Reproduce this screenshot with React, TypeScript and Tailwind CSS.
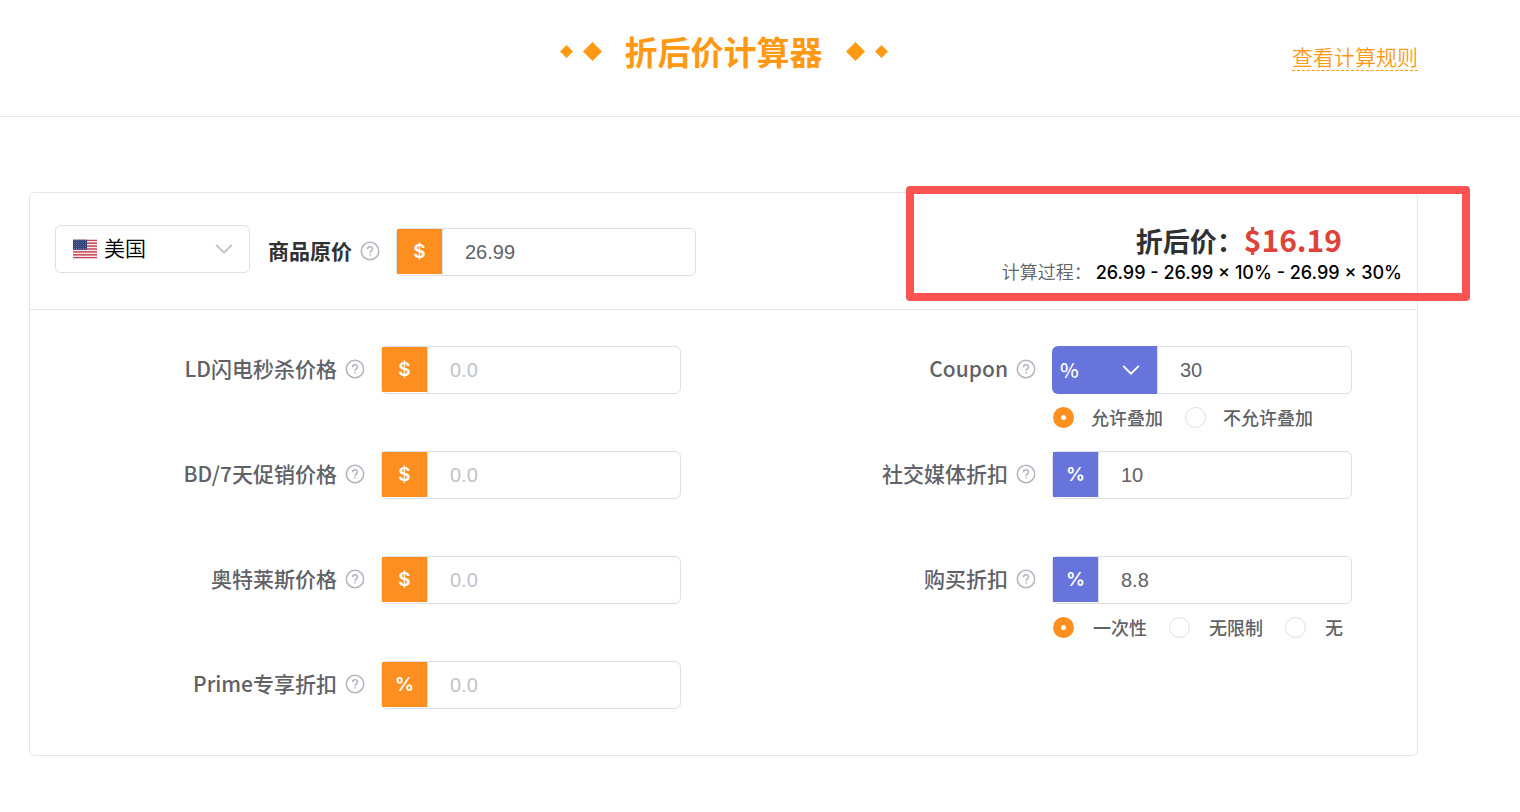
import { useState, type ReactNode } from "react";

type Tone = "orange" | "blue";

const tones: Record<Tone, string> = {
    orange: "bg-[#fc8f1f]",
    blue: "bg-[#6674dc]",
};

function HelpIcon() {
    return (
        <svg viewBox="0 0 20 20" className="size-5 shrink-0" fill="none" stroke="#b0b5bf" strokeWidth="1.5" aria-hidden="true">
            <circle cx="10" cy="10" r="8.7" />
            <path d="M7.5 8.3c0-1.6 1.1-2.5 2.5-2.5s2.5.9 2.5 2.2c0 1.8-2.4 1.9-2.4 3.9" />
            <path d="M10.1 13v1.6" />
        </svg>
    );
}

function Chevron({ className }: { className: string }) {
    return (
        <svg viewBox="0 0 18 10" className={`pointer-events-none absolute top-1/2 h-[10px] w-[18px] -translate-y-1/2 ${className}`} fill="none" strokeWidth="1.9" strokeLinecap="round" aria-hidden="true">
            <path d="M1.7 1.4 9 8.7l7.3-7.3" />
        </svg>
    );
}

function UsFlag() {
    return (
        <svg viewBox="0 0 24 19" className="pointer-events-none absolute top-1/2 left-[18px] h-[19px] w-6 -translate-y-1/2" aria-hidden="true">
            <rect width="24" height="19" fill="#f3e9ec" />
            {[0, 1, 2, 3, 4, 5, 6].map((i) => (
                <rect key={i} y={i * 2.92} width="24" height="1.46" fill="#c8414f" />
            ))}
            <rect width="14" height="10.2" fill="#2f4475" />
            {[0, 1, 2, 3, 4].map((row) =>
                [0, 1, 2, 3, 4, 5].map((col) => (
                    <circle key={`${row}-${col}`} cx={1.4 + col * 2.2} cy={1.2 + row * 1.95} r="0.4" fill="#b9c3dc" />
                ))
            )}
        </svg>
    );
}

function Diamond({ className }: { className: string }) {
    return (
        <svg viewBox="0 0 20 20" className={className} fill="#ff9913" aria-hidden="true">
            <path d="M10 0 20 10 10 20 0 10Z" />
        </svg>
    );
}

function AmountInput({ id, unit, tone, value }: { id: string; unit: string; tone: Tone; value?: string }) {
    return (
        <div className="flex h-12 w-[300px] shrink-0 rounded-[6px] border border-[#dcdfe6]">
            <span className={`flex size-[45px] shrink-0 items-center justify-center pt-0.5 font-['Inter',sans-serif] text-[19px] font-semibold text-white ${tones[tone]}`}>
                {unit}
            </span>
            <input
                id={id}
                defaultValue={value}
                placeholder="0.0"
                className="min-w-0 flex-1 rounded-r-[6px] border-l border-[#dcdfe6] bg-transparent pl-[22px] font-['Liberation_Sans',Arial,sans-serif] text-[20px] text-[#606266] outline-none placeholder:text-[#c0c4cc]"
            />
        </div>
    );
}

function Field({ id, label, children, extra }: { id: string; label: string; children: ReactNode; extra?: ReactNode }) {
    return (
        <div className="flex min-h-[82px] items-start justify-end">
            <div className="mr-4 flex h-[46px] items-center gap-2">
                <label htmlFor={id} className="pb-0.5 text-[21px] leading-6 font-medium text-[#606266]">{label}</label>
                <HelpIcon />
            </div>
            <div className="w-[300px] shrink-0">
                {children}
                {extra}
            </div>
        </div>
    );
}

function RadioRow({ name, options, labelGap }: { name: string; options: string[]; labelGap: string }) {
    const [selected, setSelected] = useState(options[0]);

    return (
        <div className="mt-3 flex items-center gap-[22px] pl-px whitespace-nowrap">
            {options.map((option) => (
                <label key={option} className={`flex items-center text-[18px] leading-[22px] font-medium text-[#606266] ${labelGap}`}>
                    <input
                        type="radio"
                        name={name}
                        checked={selected === option}
                        onChange={() => setSelected(option)}
                        className="size-[21px] shrink-0 appearance-none rounded-full border border-[#dcdfe6] bg-white checked:border-8 checked:border-[#fc8f1f]"
                    />
                    {option}
                </label>
            ))}
        </div>
    );
}

const priceFields = [
    { id: "ld", label: "LD闪电秒杀价格", unit: "$" },
    { id: "bd", label: "BD/7天促销价格", unit: "$" },
    { id: "outlet", label: "奥特莱斯价格", unit: "$" },
    { id: "prime", label: "Prime专享折扣", unit: "%" },
];

export default function App() {
    return (
        <div className="bg-white font-['Noto_Sans_CJK_SC',sans-serif]">
            <header className="border-b border-[#e8e8e8] pt-[31px] pr-[102px] pb-[45px] pl-[29px]">
                <div className="grid grid-cols-[1fr_auto_1fr] items-end">
                    <div />
                    <div className="flex items-center">
                        <Diamond className="mr-[10px] size-[13px]" />
                        <Diamond className="mr-[23px] size-[19px]" />
                        <h1 className="text-[33px] leading-10 font-bold text-[#ff9913]">折后价计算器</h1>
                        <Diamond className="ml-[23px] size-[19px]" />
                        <Diamond className="ml-[10px] size-[13px]" />
                    </div>
                    <a href="#rules" className="justify-self-end border-b border-dashed border-[#ff9913] pb-0.5 text-[21px] leading-6 font-[350] text-[#ff9913]">
                        查看计算规则
                    </a>
                </div>
            </header>

            <main className="pt-[75px] pr-[102px] pb-14 pl-[29px]">
                <section className="rounded-[6px] border border-[#e6e6ea]">
                    <div className="relative flex h-[117px] items-start border-b border-[#e6e6ea] pt-8 pl-[25px]">
                        <div className="relative w-[195px] shrink-0">
                            <UsFlag />
                            <select aria-label="国家" className="h-12 w-full appearance-none rounded-[6px] border border-[#dcdfe6] bg-transparent pb-0.5 pl-12 text-[21px] font-[350] text-black">
                                <option>美国</option>
                            </select>
                            <Chevron className="right-[17px] stroke-[#c0c4cc]" />
                        </div>
                        <div className="mt-[3px] ml-[18px] flex items-start">
                            <div className="mr-4 flex h-[46px] items-center gap-2">
                                <label htmlFor="price" className="pb-0.5 text-[21px] leading-6 font-bold text-[#303133]">商品原价</label>
                                <HelpIcon />
                            </div>
                            <AmountInput id="price" unit="$" tone="orange" value="26.99" />
                        </div>

                        <div className="mr-[15px] ml-auto -mt-1 text-right whitespace-nowrap">
                            <p className="mr-[60px] text-[27px] leading-9 font-bold text-[#303133]">
                                折后价：<span className="text-[30px] text-[#dd433a]">$16.19</span>
                            </p>
                            <p className="text-[18px] leading-6 font-[350] text-[#606266]">
                                计算过程：
                                <span className="ml-1 font-['Inter',sans-serif] font-medium text-black">26.99 - 26.99 × 10% - 26.99 × 30%</span>
                            </p>
                        </div>

                        {/* highlight frame around the result */}
                        <div className="pointer-events-none absolute -top-[7px] -right-[53px] h-[115px] w-[564px] rounded-[4px] border-8 border-[#fb5252]" />
                    </div>

                    <div className="grid grid-cols-2 gap-x-5 pt-9 pr-[65px] pb-3">
                        <div className="flex flex-col gap-[23px]">
                            {priceFields.map((f) => (
                                <Field key={f.id} id={f.id} label={f.label}>
                                    <AmountInput id={f.id} unit={f.unit} tone="orange" />
                                </Field>
                            ))}
                        </div>

                        <div className="flex flex-col gap-[23px]">
                            <Field
                                id="coupon"
                                label="Coupon"
                                extra={<RadioRow name="coupon-stack" options={["允许叠加", "不允许叠加"]} labelGap="gap-[17px]" />}
                            >
                                <div className="flex h-12">
                                    <div className="relative w-[105px] shrink-0">
                                        <select aria-label="Coupon 单位" className="h-12 w-full appearance-none rounded-l-[6px] bg-[#6674dc] pl-2 text-[20px] font-medium text-white">
                                            <option>%</option>
                                            <option>$</option>
                                        </select>
                                        <Chevron className="right-[17px] stroke-white" />
                                    </div>
                                    <input
                                        id="coupon"
                                        defaultValue="30"
                                        className="min-w-0 flex-1 rounded-r-[6px] border border-[#dcdfe6] pl-[22px] font-['Liberation_Sans',Arial,sans-serif] text-[20px] text-[#606266] outline-none"
                                    />
                                </div>
                            </Field>
                            <Field id="social" label="社交媒体折扣">
                                <AmountInput id="social" unit="%" tone="blue" value="10" />
                            </Field>
                            <Field
                                id="purchase"
                                label="购买折扣"
                                extra={<RadioRow name="purchase-limit" options={["一次性", "无限制", "无"]} labelGap="gap-[19px]" />}
                            >
                                <AmountInput id="purchase" unit="%" tone="blue" value="8.8" />
                            </Field>
                        </div>
                    </div>
                </section>
            </main>
        </div>
    );
}
